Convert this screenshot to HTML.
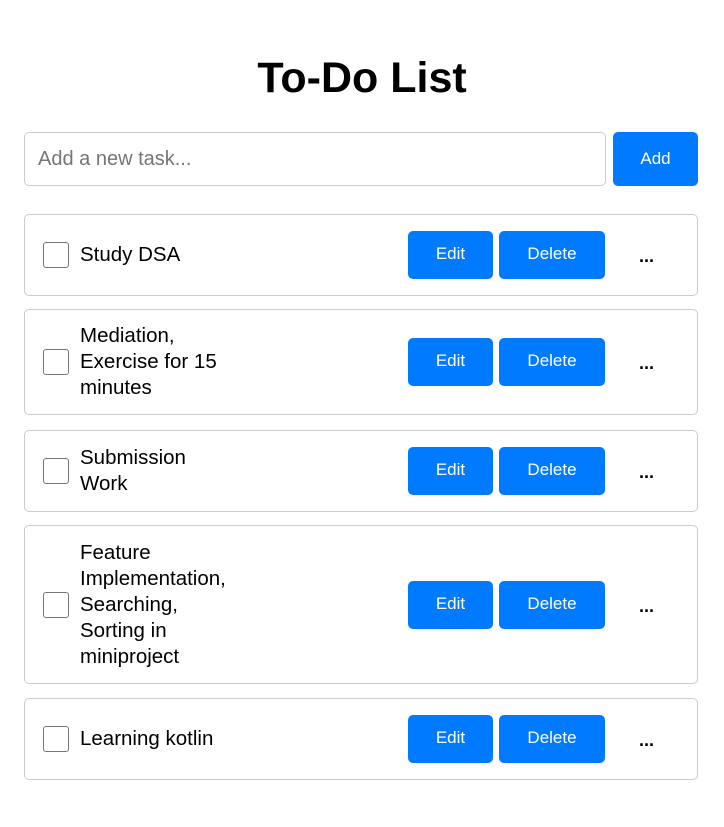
<!DOCTYPE html>
<html><head><style>
body{margin:0;width:724px;height:827px;background:#fff;font-family:"Liberation Sans",Arial,sans-serif;position:relative;overflow:hidden}
h1{position:absolute;top:53px;left:0;width:724px;text-align:center;margin:0;font-size:43px;line-height:50px;font-weight:bold;color:#000}
.inp{position:absolute;left:24px;top:132px;width:567px;height:52px;border:1px solid #ccc;border-radius:5px;font-size:20px;color:#757575;line-height:52px;padding-left:13px}
.add{position:absolute;left:613px;top:132px;width:85px;height:54px;background:#007bff;border-radius:5px;color:#fff;font-size:17px;line-height:54px;text-align:center}
.card{position:absolute;left:24px;width:672px;border:1px solid #ccc;border-radius:5px;display:flex;align-items:center}
.cb{position:absolute;left:18px;width:24px;height:24px;border:1.5px solid #767676;border-radius:3px;top:50%;margin-top:-13px}
.t{margin-left:55px;width:156px;font-size:20.5px;line-height:26px;color:#000}
.b{position:absolute;top:50%;margin-top:-24px;height:48px;background:#007bff;border-radius:5px;color:#fff;font-size:17px;line-height:46px;text-align:center}
.e{left:383px;width:85px}.d{left:474px;width:106px}
.m{position:absolute;left:614px;top:50%;margin-top:-13px;font-weight:bold;font-size:18px;line-height:28px}
</style></head><body>
<h1>To-Do List</h1>
<div class="inp">Add a new task...</div>
<div class="add">Add</div>

<div class="card" style="top:214px;height:80px"><div class="cb"></div><div class="t">Study DSA</div><div class="b e">Edit</div><div class="b d">Delete</div><div class="m">...</div></div>
<div class="card" style="top:309px;height:104px"><div class="cb"></div><div class="t">Mediation, Exercise for 15 minutes</div><div class="b e">Edit</div><div class="b d">Delete</div><div class="m">...</div></div>
<div class="card" style="top:430px;height:80px"><div class="cb"></div><div class="t">Submission Work</div><div class="b e">Edit</div><div class="b d">Delete</div><div class="m">...</div></div>
<div class="card" style="top:525px;height:157px"><div class="cb"></div><div class="t">Feature Implementation, Searching, Sorting in miniproject</div><div class="b e">Edit</div><div class="b d">Delete</div><div class="m">...</div></div>
<div class="card" style="top:698px;height:80px"><div class="cb"></div><div class="t">Learning kotlin</div><div class="b e">Edit</div><div class="b d">Delete</div><div class="m">...</div></div>
</body></html>
